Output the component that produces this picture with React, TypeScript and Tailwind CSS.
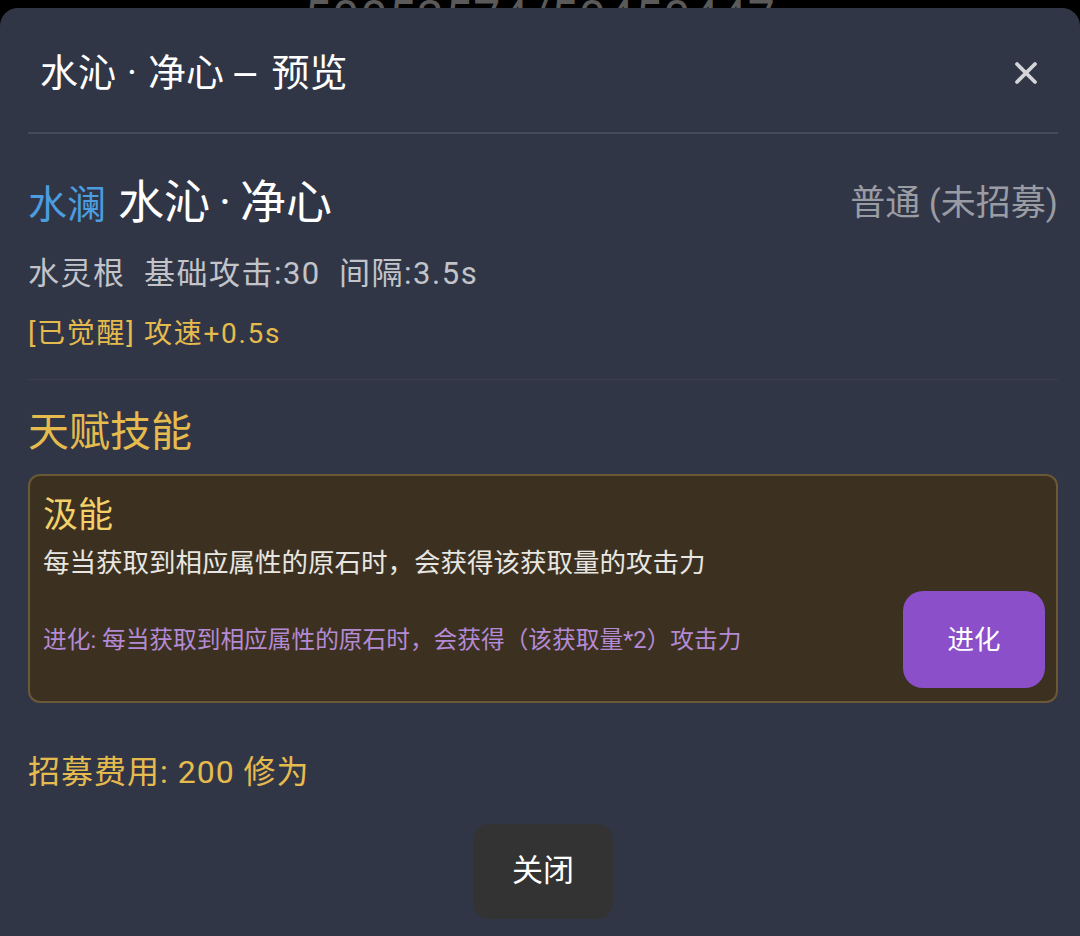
import { X } from "lucide-react";

const font = { fontFamily: 'Roboto, "Noto Sans CJK SC", "Noto Sans", sans-serif' };

export default function App() {
  return (
    <div className="min-h-[936px] w-[1080px] bg-black overflow-hidden" style={font}>
      <div className="h-[8px] overflow-hidden flex justify-center">
        <div className="mt-[-6px] text-[48px] leading-none text-[#5a5a5a] tracking-wide">50053574/50450447</div>
      </div>

      <div className="bg-[#313646] rounded-t-[18px] pl-[28px] pr-[22px] h-[928px]">
        <div className="flex items-center justify-between pl-[12px] pr-[14px] pt-[40px] pb-[34px]">
          <h2 className="text-[38px] leading-[50px] text-white">
            水沁<span className="mx-[11px]">·</span>净心<span className="inline-block ml-[16px] mr-[21px] scale-x-[2.4]">-</span>预览
          </h2>
          <X className="w-[36px] h-[36px] text-[#d4d5d9]" strokeWidth={2.5} />
        </div>
        <div className="h-[2px] bg-[#464b5a]" />

        <div className="flex items-center justify-between pt-[40px]">
          <div className="flex items-baseline leading-[56px]">
            <span className="text-[39px] text-[#4b9de0]">水澜</span>
            <span className="ml-[12px] text-[46px] text-white">
              水沁<span className="mx-[9px]">·</span>净心
            </span>
          </div>
          <div className="text-[35px] leading-[44px] text-[#9a9ca4]">普通 (未招募)</div>
        </div>

        <div className="mt-[21px] text-[31px] leading-[40px] tracking-[1.5px] text-[#c2c4ca] whitespace-pre">水灵根  基础攻击:30  间隔:3.5s</div>
        <div className="mt-[22px] text-[28px] leading-[36px] tracking-[1.7px] text-[#e6bb4e]">[已觉醒] 攻速+0.5s</div>

        <div className="mt-[27px] h-px bg-[#3a3e48]" />

        <div className="mt-[26px] text-[41px] leading-[52px] text-[#e6bb4e]">天赋技能</div>

        <div className="mt-[16px] rounded-[12px] border-2 border-[#6a5836] bg-[#3c3120] pt-[18px] pb-[13px] pl-[13px] pr-[11px]">
          <div className="text-[35px] leading-[44px] text-[#f2d06a]">汲能</div>
          <div className="mt-[7px] text-[26.5px] leading-[36px] text-[#e8e6e2]">每当获取到相应属性的原石时，会获得该获取量的攻击力</div>
          <div className="mt-[10px] flex items-center justify-between">
            <div className="text-[23.7px] leading-[32px] text-[#b48ad6]">进化: 每当获取到相应属性的原石时，会获得（该获取量*2）攻击力</div>
            <button className="w-[142px] h-[97px] rounded-[20px] bg-[#8a4fc9] text-white text-[26.5px]">进化</button>
          </div>
        </div>

        <div className="mt-[49px] text-[32px] leading-[40px] tracking-[1px] text-[#e6bb4e]">招募费用: 200 修为</div>

        <div className="mt-[32px] flex justify-center">
          <button className="w-[140px] h-[95px] rounded-[16px] bg-[#333333] text-white text-[31px]">关闭</button>
        </div>
      </div>
    </div>
  );
}
